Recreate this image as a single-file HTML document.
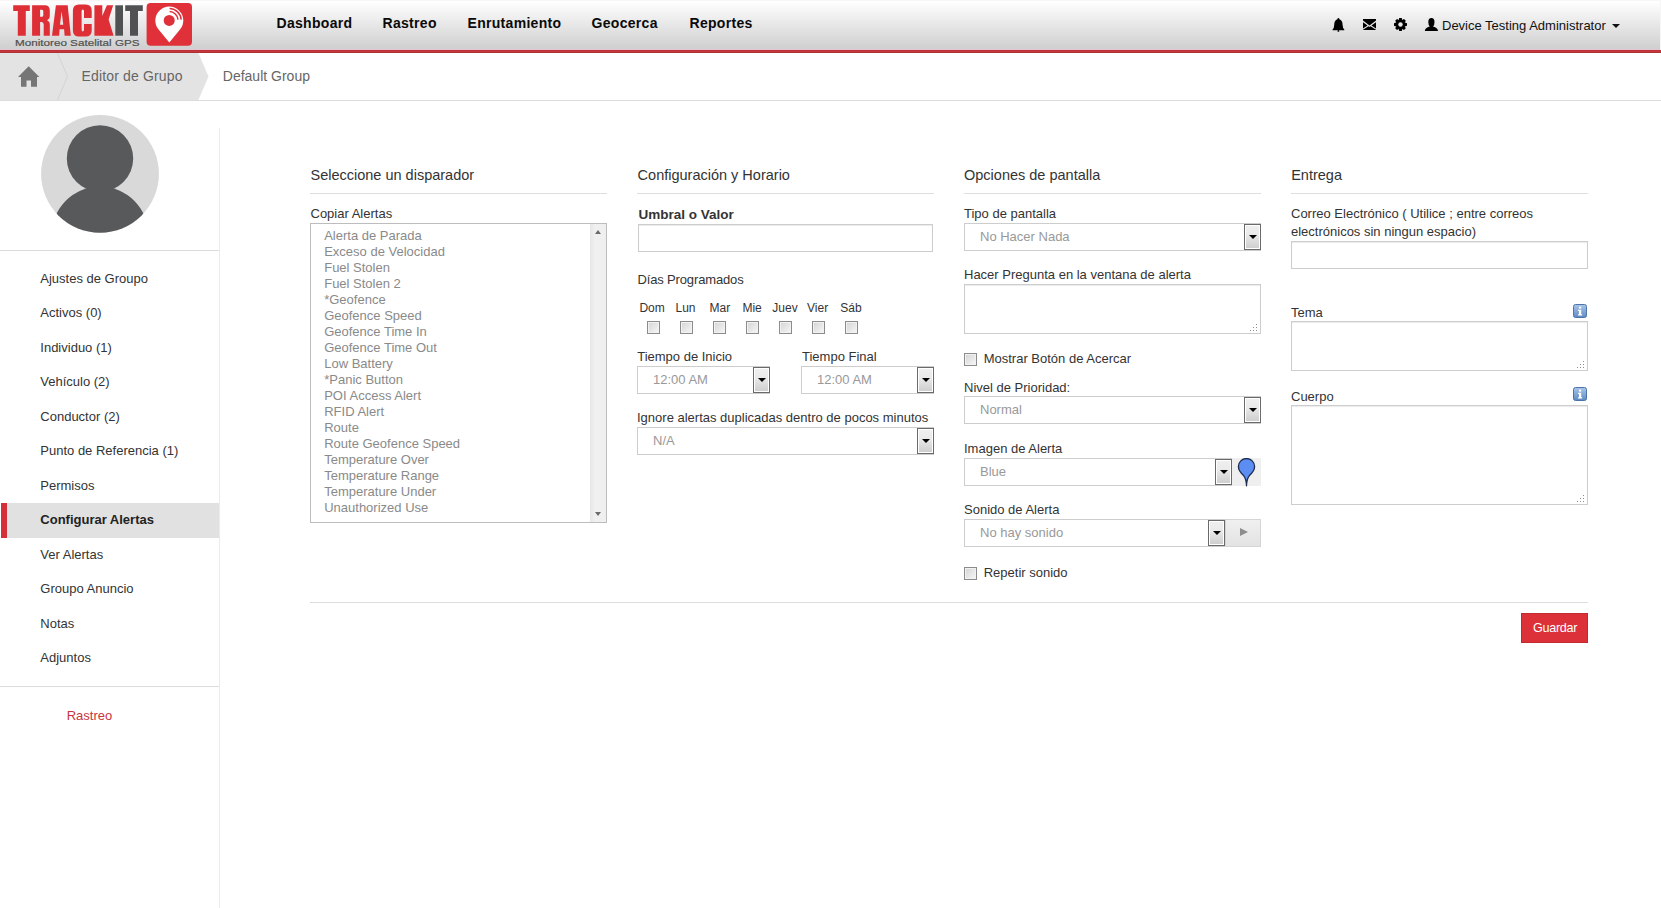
<!DOCTYPE html>
<html><head><meta charset="utf-8"><style>
*{box-sizing:border-box;margin:0;padding:0}
html,body{width:1661px;height:908px;overflow:hidden;background:#fff;font-family:"Liberation Sans",sans-serif;color:#333}
.t{position:absolute;white-space:nowrap}
.inp{position:absolute;border:1px solid #cdcdcd;background:#fff;box-shadow:inset 0 1px 1px rgba(0,0,0,.08)}
.dd{position:absolute;background:linear-gradient(#f0f0f0,#e9e9e9 45%,#e2e2e2 55%,#cdcdcd);border:1px solid #6a6a6a;box-shadow:inset 0 0 0 1px #fff}
.dd i{position:absolute;left:50%;top:50%;margin-left:-4px;margin-top:-2.5px;width:0;height:0;border-left:4px solid transparent;border-right:4px solid transparent;border-top:4.5px solid #000}
.cb{position:absolute;width:13px;height:13px;border:1px solid #8c8c8c;background:linear-gradient(135deg,#d4d4d4,#f7f7f7);box-shadow:inset 0 0 0 1px #f2f2f2}
</style></head><body>
<div style="position:absolute;left:0px;top:0px;width:1661px;height:50px;background:linear-gradient(#fefefe 2px,#d0d0d0 48px)"></div>
<div style="position:absolute;left:0px;top:0px;width:1661px;height:1px;background:#f7f7f7"></div>
<div style="position:absolute;left:0px;top:48px;width:1661px;height:1px;background:#cdd0d4"></div>
<div style="position:absolute;left:0px;top:49px;width:1661px;height:1px;background:#e6c6ca"></div>
<div style="position:absolute;left:0px;top:50px;width:1661px;height:1px;background:#bd3237"></div>
<div style="position:absolute;left:0px;top:51px;width:1661px;height:1px;background:#c6353a"></div>
<div style="position:absolute;left:0px;top:52px;width:1661px;height:1px;background:#aa3538"></div>
<svg style="position:absolute;left:0;top:0" width="200" height="50" viewBox="0 0 200 50">
<g fill="#de2f37">
<path d="M13.2 5.2H29.8V10.9H25.8V35.7H17.8V10.9H13.2Z"/>
<path d="M32.1 5.2H44.5Q49.8 5.2 49.8 10.5V15.8Q49.8 19 47 20.2Q49.8 21.4 49.8 24.5V35.7H43.7V24.5Q43.7 22 41.5 22H40.1V35.7H32.1ZM40.1 9.8V16.7H41.8Q43.3 16.7 43.3 15.2V11.3Q43.3 9.8 41.8 9.8Z" fill-rule="evenodd"/>
<path d="M55.9 5.2H67.7L70.8 35.7H64.6L64.1 29.2H59.6L59.1 35.7H52ZM61.6 11.5L60 24.8H63.3Z" fill-rule="evenodd"/>
<path d="M79 4.6H85.6Q91.7 4.6 91.7 10.6V18.1H84V11.5Q84 9.5 82.8 9.5Q81.6 9.5 81.6 11.5V29.4Q81.6 31.4 82.8 31.4Q84 31.4 84 29.4V23.9H91.7V30.4Q91.7 36.4 85.6 36.4H79Q72.9 36.4 72.9 30.4V10.6Q72.9 4.6 79 4.6Z"/>
<path d="M94.4 5.3H102.3V16L106.9 5.3H113.2L108.6 19.6L113.6 35.7H94.4Z"/>
</g>
<g fill="#4f5153">
<path d="M115.3 5.3H123V35.7H115.3Z"/>
<path d="M125.2 5.3H142.8V10.9H138V35.7H130V10.9H125.2Z"/>
</g>
<rect x="146.6" y="3" width="45.4" height="42.7" rx="4" fill="#e0313a"/>
<path d="M169.3 42.4L158.6 29.6A14 14 0 1 1 180 29.6Z" fill="#fff"/>
<circle cx="169.2" cy="20.4" r="5.5" fill="#e0313a"/>
<path d="M169.6 11.6A8.8 8.8 0 0 1 178 19.6" fill="none" stroke="#e0313a" stroke-width="1.5"/>
<path d="M169.6 8.6A11.8 11.8 0 0 1 181.2 19.6" fill="none" stroke="#e0313a" stroke-width="1.5"/>
</svg>
<div class="t" style="left:15px;top:38.73px;font-size:9.3px;line-height:9.3px;color:#505050;font-weight:normal;transform:scaleX(1.255);transform-origin:0 0;-webkit-text-stroke:0.2px #505050">Monitoreo Satelital GPS</div>
<div class="t" style="left:276.5px;top:15.95px;font-size:14px;line-height:14px;color:#0a0a0a;font-weight:bold;letter-spacing:0.3px">Dashboard</div>
<div class="t" style="left:382.5px;top:15.95px;font-size:14px;line-height:14px;color:#0a0a0a;font-weight:bold;letter-spacing:0.3px">Rastreo</div>
<div class="t" style="left:467.5px;top:15.95px;font-size:14px;line-height:14px;color:#0a0a0a;font-weight:bold;letter-spacing:0.3px">Enrutamiento</div>
<div class="t" style="left:591.5px;top:15.95px;font-size:14px;line-height:14px;color:#0a0a0a;font-weight:bold;letter-spacing:0.3px">Geocerca</div>
<div class="t" style="left:689.5px;top:15.95px;font-size:14px;line-height:14px;color:#0a0a0a;font-weight:bold;letter-spacing:0.3px">Reportes</div>
<svg style="position:absolute;left:1330px;top:16px" width="112" height="18" viewBox="1330 16 112 18">
<path d="M1338.4 18Q1339.3 18 1339.4 19.3Q1342.6 20.3 1342.6 25Q1342.8 28.4 1344.3 29.4V30.2H1332.6V29.4Q1334.1 28.4 1334.2 25Q1334.2 20.3 1337.4 19.3Q1337.5 18 1338.4 18Z" fill="#000"/>
<circle cx="1338.4" cy="30.9" r="0.9" fill="#000"/>
<path d="M1363 19H1376V20.6L1369.5 25.4L1363 20.6Z" fill="#000"/>
<path d="M1363 22.2L1367.6 25.5L1363 28.6ZM1376 22.2L1371.4 25.5L1376 28.6ZM1363 29.9V29.7L1368.5 26.3L1369.5 27L1370.5 26.3L1376 29.7V29.9Z" fill="#000"/>
<g transform="translate(1400.5 24.5)"><path d="M-1.3 -6.5H1.3L1.7 -4.6L3.5 -5.6L5.3 -3.8L4.3 -2L6.5 -1.3V1.3L4.3 2L5.3 3.8L3.5 5.6L1.7 4.6L1.3 6.5H-1.3L-1.7 4.6L-3.5 5.6L-5.3 3.8L-4.3 2L-6.5 1.3V-1.3L-4.3 -2L-5.3 -3.8L-3.5 -5.6L-1.7 -4.6Z" fill="#000"/><circle r="2.2" fill="#e9e9e9"/></g>
<path d="M1431.4 18Q1428.3 18 1428.3 22Q1428.3 25.4 1429.8 26.5Q1425 27.6 1424.8 31H1438Q1437.8 27.6 1433 26.5Q1434.5 25.4 1434.5 22Q1434.5 18 1431.4 18Z" fill="#000"/>
</svg>
<div class="t" style="left:1442px;top:18.60px;font-size:13px;line-height:13px;color:#111;font-weight:normal;">Device Testing Administrator</div>
<div style="position:absolute;left:1612px;top:24px;width:0;height:0;border-left:4px solid transparent;border-right:4px solid transparent;border-top:4px solid #111"></div>
<div style="position:absolute;left:1660px;top:0px;width:1px;height:50px;background:#f6f6f6"></div>
<div style="position:absolute;left:0px;top:53px;width:1661px;height:47px;background:#fff"></div>
<div style="position:absolute;left:0px;top:100px;width:1661px;height:1px;background:#dcdcdc"></div>
<svg style="position:absolute;left:0;top:53px" width="230" height="47" viewBox="0 53 230 47">
<path d="M0 53H198.4L208.5 76.5L198.4 100H0Z" fill="#e3e3e3"/>
<path d="M57.5 53L67.5 76.5L57.5 100" fill="none" stroke="#cfcfcf" stroke-width="0.8"/>
<path d="M18 77L28.7 66.3L39.4 77H37V86.8H31V80.5H26.5V86.8H21V77Z" fill="#767676"/>
</svg>
<div class="t" style="left:81.5px;top:68.95px;font-size:14px;line-height:14px;color:#666;font-weight:normal;letter-spacing:0.15px">Editor de Grupo</div>
<div class="t" style="left:222.8px;top:68.95px;font-size:14px;line-height:14px;color:#666;font-weight:normal;">Default Group</div>
<div style="position:absolute;left:219px;top:128px;width:1px;height:780px;background:#ebebeb"></div>
<div style="position:absolute;left:0px;top:250px;width:219px;height:1px;background:#dcdcdc"></div>
<svg style="position:absolute;left:40px;top:114px" width="120" height="120" viewBox="40 114 120 120">
<defs><clipPath id="av"><circle cx="100" cy="173.8" r="58.9"/></clipPath></defs>
<circle cx="100" cy="173.8" r="58.9" fill="#d9d9d9"/>
<g clip-path="url(#av)" fill="#58595b">
<circle cx="100" cy="158.5" r="33.2"/>
<circle cx="100" cy="235" r="48.4"/>
</g></svg>
<div class="t" style="left:40.3px;top:271.90px;font-size:13px;line-height:13px;color:#333;font-weight:normal;">Ajustes de Groupo</div>
<div class="t" style="left:40.3px;top:306.40px;font-size:13px;line-height:13px;color:#333;font-weight:normal;">Activos (0)</div>
<div class="t" style="left:40.3px;top:340.90px;font-size:13px;line-height:13px;color:#333;font-weight:normal;">Individuo (1)</div>
<div class="t" style="left:40.3px;top:375.40px;font-size:13px;line-height:13px;color:#333;font-weight:normal;">Vehículo (2)</div>
<div class="t" style="left:40.3px;top:409.90px;font-size:13px;line-height:13px;color:#333;font-weight:normal;">Conductor (2)</div>
<div class="t" style="left:40.3px;top:444.40px;font-size:13px;line-height:13px;color:#333;font-weight:normal;">Punto de Referencia (1)</div>
<div class="t" style="left:40.3px;top:478.90px;font-size:13px;line-height:13px;color:#333;font-weight:normal;">Permisos</div>
<div style="position:absolute;left:1px;top:503px;width:218px;height:35px;background:#e1e1e1"></div>
<div style="position:absolute;left:1px;top:503px;width:6px;height:35px;background:#d3303a"></div>
<div class="t" style="left:40.3px;top:513.40px;font-size:13px;line-height:13px;color:#222;font-weight:bold;">Configurar Alertas</div>
<div class="t" style="left:40.3px;top:547.90px;font-size:13px;line-height:13px;color:#333;font-weight:normal;">Ver Alertas</div>
<div class="t" style="left:40.3px;top:582.40px;font-size:13px;line-height:13px;color:#333;font-weight:normal;">Groupo Anuncio</div>
<div class="t" style="left:40.3px;top:616.90px;font-size:13px;line-height:13px;color:#333;font-weight:normal;">Notas</div>
<div class="t" style="left:40.3px;top:651.40px;font-size:13px;line-height:13px;color:#333;font-weight:normal;">Adjuntos</div>
<div style="position:absolute;left:0px;top:686px;width:219px;height:1px;background:#dcdcdc"></div>
<div class="t" style="left:66.7px;top:708.60px;font-size:13px;line-height:13px;color:#c9353d;font-weight:normal;">Rastreo</div>
<div class="t" style="left:310.5px;top:167.73px;font-size:14.5px;line-height:14.5px;color:#333;font-weight:normal;">Seleccione un disparador</div>
<div style="position:absolute;left:310px;top:193px;width:297px;height:1px;background:#dedede"></div>
<div class="t" style="left:310.5px;top:206.80px;font-size:13px;line-height:13px;color:#333;font-weight:normal;">Copiar Alertas</div>
<div class="inp" style="left:310px;top:223px;width:297px;height:300px;box-shadow:none;border-color:#bdbdbd"></div>
<div style="position:absolute;left:590px;top:224px;width:16px;height:298px;background:linear-gradient(90deg,#e6e6e6,#f0f0f0 30%,#efefef)"></div>
<div style="position:absolute;left:595px;top:230px;width:0;height:0;border-left:3.5px solid transparent;border-right:3.5px solid transparent;border-bottom:4px solid #6a6a6a"></div>
<div style="position:absolute;left:595px;top:512px;width:0;height:0;border-left:3.5px solid transparent;border-right:3.5px solid transparent;border-top:4px solid #6a6a6a"></div>
<div class="t" style="left:324.2px;top:228.80px;font-size:13px;line-height:13px;color:#8a8a8a;font-weight:normal;">Alerta de Parada</div>
<div class="t" style="left:324.2px;top:244.80px;font-size:13px;line-height:13px;color:#8a8a8a;font-weight:normal;">Exceso de Velocidad</div>
<div class="t" style="left:324.2px;top:260.80px;font-size:13px;line-height:13px;color:#8a8a8a;font-weight:normal;">Fuel Stolen</div>
<div class="t" style="left:324.2px;top:276.80px;font-size:13px;line-height:13px;color:#8a8a8a;font-weight:normal;">Fuel Stolen 2</div>
<div class="t" style="left:324.2px;top:292.80px;font-size:13px;line-height:13px;color:#8a8a8a;font-weight:normal;">*Geofence</div>
<div class="t" style="left:324.2px;top:308.80px;font-size:13px;line-height:13px;color:#8a8a8a;font-weight:normal;">Geofence Speed</div>
<div class="t" style="left:324.2px;top:324.80px;font-size:13px;line-height:13px;color:#8a8a8a;font-weight:normal;">Geofence Time In</div>
<div class="t" style="left:324.2px;top:340.80px;font-size:13px;line-height:13px;color:#8a8a8a;font-weight:normal;">Geofence Time Out</div>
<div class="t" style="left:324.2px;top:356.80px;font-size:13px;line-height:13px;color:#8a8a8a;font-weight:normal;">Low Battery</div>
<div class="t" style="left:324.2px;top:372.80px;font-size:13px;line-height:13px;color:#8a8a8a;font-weight:normal;">*Panic Button</div>
<div class="t" style="left:324.2px;top:388.80px;font-size:13px;line-height:13px;color:#8a8a8a;font-weight:normal;">POI Access Alert</div>
<div class="t" style="left:324.2px;top:404.80px;font-size:13px;line-height:13px;color:#8a8a8a;font-weight:normal;">RFID Alert</div>
<div class="t" style="left:324.2px;top:420.80px;font-size:13px;line-height:13px;color:#8a8a8a;font-weight:normal;">Route</div>
<div class="t" style="left:324.2px;top:436.80px;font-size:13px;line-height:13px;color:#8a8a8a;font-weight:normal;">Route Geofence Speed</div>
<div class="t" style="left:324.2px;top:452.80px;font-size:13px;line-height:13px;color:#8a8a8a;font-weight:normal;">Temperature Over</div>
<div class="t" style="left:324.2px;top:468.80px;font-size:13px;line-height:13px;color:#8a8a8a;font-weight:normal;">Temperature Range</div>
<div class="t" style="left:324.2px;top:484.80px;font-size:13px;line-height:13px;color:#8a8a8a;font-weight:normal;">Temperature Under</div>
<div class="t" style="left:324.2px;top:500.80px;font-size:13px;line-height:13px;color:#8a8a8a;font-weight:normal;">Unauthorized Use</div>
<div class="t" style="left:637.6px;top:167.53px;font-size:14.5px;line-height:14.5px;color:#333;font-weight:normal;">Configuración y Horario</div>
<div style="position:absolute;left:637px;top:193px;width:297px;height:1px;background:#dedede"></div>
<div class="t" style="left:638.6px;top:207.57px;font-size:13.5px;line-height:13.5px;color:#333;font-weight:bold;">Umbral o Valor</div>
<div class="inp" style="left:638px;top:224px;width:295px;height:28px"></div>
<div class="t" style="left:637.5px;top:272.80px;font-size:13px;line-height:13px;color:#333;font-weight:normal;letter-spacing:-0.15px">Días Programados</div>
<div class="t" style="left:639.4px;top:301.54px;font-size:12px;line-height:12px;color:#333;font-weight:normal;">Dom</div>
<div class="cb" style="left:647px;top:321px"></div>
<div class="t" style="left:675.5px;top:301.54px;font-size:12px;line-height:12px;color:#333;font-weight:normal;">Lun</div>
<div class="cb" style="left:680px;top:321px"></div>
<div class="t" style="left:709.5px;top:301.54px;font-size:12px;line-height:12px;color:#333;font-weight:normal;">Mar</div>
<div class="cb" style="left:713px;top:321px"></div>
<div class="t" style="left:742.4px;top:301.54px;font-size:12px;line-height:12px;color:#333;font-weight:normal;">Mie</div>
<div class="cb" style="left:746px;top:321px"></div>
<div class="t" style="left:772.3px;top:301.54px;font-size:12px;line-height:12px;color:#333;font-weight:normal;">Juev</div>
<div class="cb" style="left:779px;top:321px"></div>
<div class="t" style="left:807px;top:301.54px;font-size:12px;line-height:12px;color:#333;font-weight:normal;">Vier</div>
<div class="cb" style="left:812px;top:321px"></div>
<div class="t" style="left:840.3px;top:301.54px;font-size:12px;line-height:12px;color:#333;font-weight:normal;">Sáb</div>
<div class="cb" style="left:845px;top:321px"></div>
<div class="t" style="left:637.2px;top:350.10px;font-size:13px;line-height:13px;color:#333;font-weight:normal;">Tiempo de Inicio</div>
<div class="t" style="left:802px;top:350.10px;font-size:13px;line-height:13px;color:#333;font-weight:normal;">Tiempo Final</div>
<div class="inp" style="left:637px;top:366px;width:133px;height:28px;box-shadow:none"></div>
<div class="t" style="left:653px;top:373.00px;font-size:13px;line-height:13px;color:#999;font-weight:normal;">12:00 AM</div>
<div class="dd" style="left:753px;top:367px;width:17px;height:26px"><i></i></div>
<div class="inp" style="left:801px;top:366px;width:133px;height:28px;box-shadow:none"></div>
<div class="t" style="left:817px;top:373.00px;font-size:13px;line-height:13px;color:#999;font-weight:normal;">12:00 AM</div>
<div class="dd" style="left:917px;top:367px;width:17px;height:26px"><i></i></div>
<div class="t" style="left:637px;top:411.20px;font-size:13px;line-height:13px;color:#333;font-weight:normal;">Ignore alertas duplicadas dentro de pocos minutos</div>
<div class="inp" style="left:637px;top:427px;width:297px;height:28px;box-shadow:none"></div>
<div class="t" style="left:653px;top:434.00px;font-size:13px;line-height:13px;color:#999;font-weight:normal;">N/A</div>
<div class="dd" style="left:917px;top:428px;width:17px;height:26px"><i></i></div>
<div class="t" style="left:964px;top:167.53px;font-size:14.5px;line-height:14.5px;color:#333;font-weight:normal;">Opciones de pantalla</div>
<div style="position:absolute;left:964px;top:193px;width:297px;height:1px;background:#dedede"></div>
<div class="t" style="left:964px;top:206.90px;font-size:13px;line-height:13px;color:#333;font-weight:normal;">Tipo de pantalla</div>
<div class="inp" style="left:964px;top:223px;width:297px;height:28px;box-shadow:none"></div>
<div class="t" style="left:980px;top:230.00px;font-size:13px;line-height:13px;color:#999;font-weight:normal;">No Hacer Nada</div>
<div class="dd" style="left:1244px;top:224px;width:17px;height:26px"><i></i></div>
<div class="t" style="left:964px;top:267.80px;font-size:13px;line-height:13px;color:#333;font-weight:normal;">Hacer Pregunta en la ventana de alerta</div>
<div class="inp" style="left:964px;top:284px;width:297px;height:50px"></div>
<div class="cb" style="left:964px;top:353px"></div>
<div class="t" style="left:983.7px;top:352.00px;font-size:13px;line-height:13px;color:#333;font-weight:normal;">Mostrar Botón de Acercar</div>
<div class="t" style="left:964px;top:380.80px;font-size:13px;line-height:13px;color:#333;font-weight:normal;">Nivel de Prioridad:</div>
<div class="inp" style="left:964px;top:396px;width:297px;height:28px;box-shadow:none"></div>
<div class="t" style="left:980px;top:403.00px;font-size:13px;line-height:13px;color:#999;font-weight:normal;">Normal</div>
<div class="dd" style="left:1244px;top:397px;width:17px;height:26px"><i></i></div>
<div class="t" style="left:964px;top:442.30px;font-size:13px;line-height:13px;color:#333;font-weight:normal;">Imagen de Alerta</div>
<div class="inp" style="left:964px;top:458px;width:268px;height:28px;box-shadow:none"></div>
<div class="t" style="left:980px;top:465.00px;font-size:13px;line-height:13px;color:#999;font-weight:normal;">Blue</div>
<div class="dd" style="left:1215px;top:459px;width:17px;height:26px"><i></i></div>
<div style="position:absolute;left:1232px;top:458px;width:29px;height:28px;background:#efefef"></div>
<svg style="position:absolute;left:1232px;top:458px" width="29" height="30" viewBox="1232 458 29 30"><path d="M1246.5 485.8Q1246.3 479 1243.6 475.6Q1238.4 471 1238.4 466.6A8.1 8.1 0 0 1 1254.6 466.6Q1254.6 471 1249.4 475.6Q1246.7 479 1246.5 485.8Z" fill="#5b8df2" stroke="#1e2c4e" stroke-width="1.3" stroke-linejoin="round"/></svg>
<div class="t" style="left:964px;top:503.20px;font-size:13px;line-height:13px;color:#333;font-weight:normal;">Sonido de Alerta</div>
<div class="inp" style="left:964px;top:519px;width:261px;height:28px;box-shadow:none"></div>
<div class="t" style="left:980px;top:526.00px;font-size:13px;line-height:13px;color:#999;font-weight:normal;">No hay sonido</div>
<div class="dd" style="left:1208px;top:520px;width:17px;height:26px"><i></i></div>
<div style="position:absolute;left:1225px;top:519px;width:36px;height:28px;background:linear-gradient(#f0f0f0,#e3e3e3);border:1px solid #d5d5d5"></div>
<div style="position:absolute;left:1240px;top:528px;width:0;height:0;border-top:4.5px solid transparent;border-bottom:4.5px solid transparent;border-left:8px solid #8d8d8d"></div>
<div class="cb" style="left:964px;top:567px"></div>
<div class="t" style="left:983.7px;top:566.00px;font-size:13px;line-height:13px;color:#333;font-weight:normal;">Repetir sonido</div>
<div style="position:absolute;left:1256px;top:330px;width:1px;height:1px;background:#8e8e8e"></div>
<div style="position:absolute;left:1253px;top:330px;width:1px;height:1px;background:#8e8e8e"></div>
<div style="position:absolute;left:1250px;top:330px;width:1px;height:1px;background:#8e8e8e"></div>
<div style="position:absolute;left:1256px;top:327px;width:1px;height:1px;background:#8e8e8e"></div>
<div style="position:absolute;left:1253px;top:327px;width:1px;height:1px;background:#8e8e8e"></div>
<div style="position:absolute;left:1256px;top:324px;width:1px;height:1px;background:#8e8e8e"></div>
<div class="t" style="left:1291.2px;top:167.73px;font-size:14.5px;line-height:14.5px;color:#333;font-weight:normal;">Entrega</div>
<div style="position:absolute;left:1291px;top:193px;width:297px;height:1px;background:#dedede"></div>
<div class="t" style="left:1291px;top:206.90px;font-size:13px;line-height:13px;color:#333;font-weight:normal;">Correo Electrónico ( Utilice ; entre correos</div>
<div class="t" style="left:1291px;top:224.90px;font-size:13px;line-height:13px;color:#333;font-weight:normal;">electrónicos sin ningun espacio)</div>
<div class="inp" style="left:1291px;top:241px;width:297px;height:28px"></div>
<div class="t" style="left:1291px;top:306.40px;font-size:13px;line-height:13px;color:#333;font-weight:normal;">Tema</div>
<svg style="position:absolute;left:1573px;top:304px" width="14" height="14" viewBox="0 0 14 14"><defs><linearGradient id="ig1573304" x1="0" y1="0" x2="0" y2="1"><stop offset="0" stop-color="#a9c6ea"/><stop offset="1" stop-color="#5d8ac4"/></linearGradient></defs><rect x="0.5" y="0.5" width="13" height="13" rx="2" fill="url(#ig1573304)" stroke="#4d74a8"/><rect x="6" y="2.6" width="2.2" height="2" fill="#fff"/><path d="M5 5.8H8.2V10.2H9.2V11.4H5V10.2H6V7H5Z" fill="#fff"/></svg>
<div class="inp" style="left:1291px;top:321px;width:297px;height:50px"></div>
<div style="position:absolute;left:1583px;top:367px;width:1px;height:1px;background:#8e8e8e"></div>
<div style="position:absolute;left:1580px;top:367px;width:1px;height:1px;background:#8e8e8e"></div>
<div style="position:absolute;left:1577px;top:367px;width:1px;height:1px;background:#8e8e8e"></div>
<div style="position:absolute;left:1583px;top:364px;width:1px;height:1px;background:#8e8e8e"></div>
<div style="position:absolute;left:1580px;top:364px;width:1px;height:1px;background:#8e8e8e"></div>
<div style="position:absolute;left:1583px;top:361px;width:1px;height:1px;background:#8e8e8e"></div>
<div class="t" style="left:1291px;top:389.60px;font-size:13px;line-height:13px;color:#333;font-weight:normal;">Cuerpo</div>
<svg style="position:absolute;left:1573px;top:387px" width="14" height="14" viewBox="0 0 14 14"><defs><linearGradient id="ig1573387" x1="0" y1="0" x2="0" y2="1"><stop offset="0" stop-color="#a9c6ea"/><stop offset="1" stop-color="#5d8ac4"/></linearGradient></defs><rect x="0.5" y="0.5" width="13" height="13" rx="2" fill="url(#ig1573387)" stroke="#4d74a8"/><rect x="6" y="2.6" width="2.2" height="2" fill="#fff"/><path d="M5 5.8H8.2V10.2H9.2V11.4H5V10.2H6V7H5Z" fill="#fff"/></svg>
<div class="inp" style="left:1291px;top:405px;width:297px;height:100px"></div>
<div style="position:absolute;left:1583px;top:501px;width:1px;height:1px;background:#8e8e8e"></div>
<div style="position:absolute;left:1580px;top:501px;width:1px;height:1px;background:#8e8e8e"></div>
<div style="position:absolute;left:1577px;top:501px;width:1px;height:1px;background:#8e8e8e"></div>
<div style="position:absolute;left:1583px;top:498px;width:1px;height:1px;background:#8e8e8e"></div>
<div style="position:absolute;left:1580px;top:498px;width:1px;height:1px;background:#8e8e8e"></div>
<div style="position:absolute;left:1583px;top:495px;width:1px;height:1px;background:#8e8e8e"></div>
<div style="position:absolute;left:310px;top:602px;width:1278px;height:1px;background:#dddddd"></div>
<div style="position:absolute;left:1521px;top:613px;width:67px;height:30px;background:#dc3139;border:1px solid #c22a31"></div>
<div class="t" style="left:1533px;top:621.83px;font-size:12.6px;line-height:12.6px;color:#fff;font-weight:normal;letter-spacing:-0.3px">Guardar</div>
</body></html>
